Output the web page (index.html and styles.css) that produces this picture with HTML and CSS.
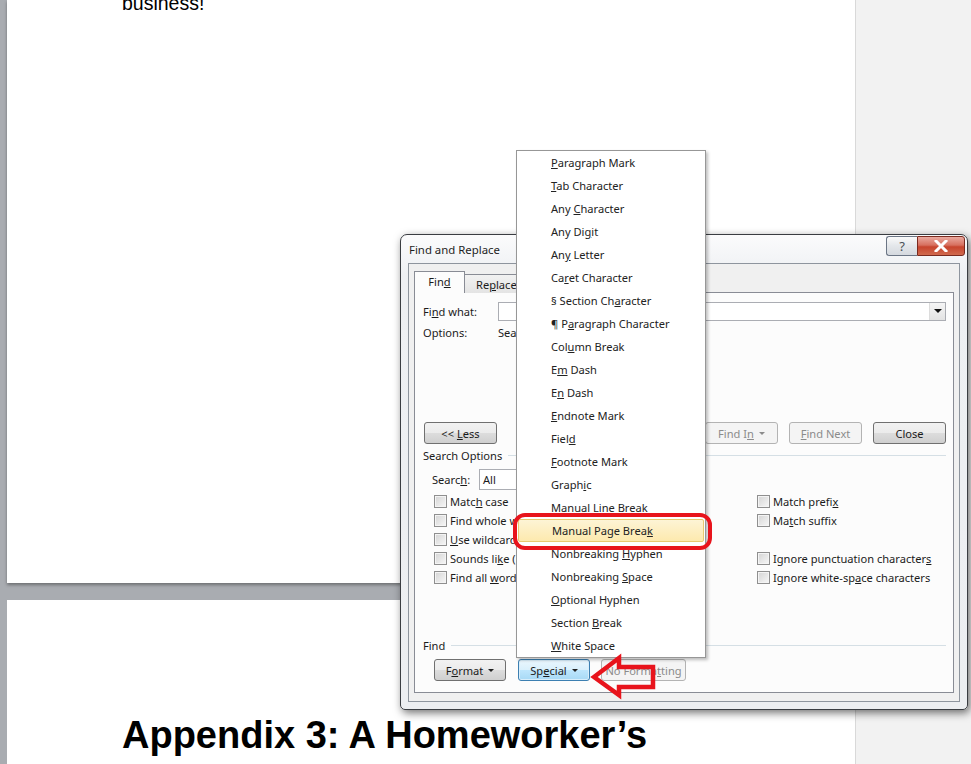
FILE: index.html
```html
<!DOCTYPE html>
<html lang="en">
<head>
    <meta charset="UTF-8">
    <title>Find and Replace</title>
    <link rel="stylesheet" href="styles.css">
</head>
<body>
    <!-- Document view behind the dialog -->
    <div class="workspace">
        <div class="doc-area">
            <div class="page page-first">
                <p class="body-text">business!</p>
            </div>
            <div class="page page-next">
                <h1 class="doc-heading">Appendix 3: A Homeworker’s</h1>
            </div>
        </div>
        <div class="side-pane"></div>
    </div>

    <!-- Find and Replace dialog -->
    <div class="dialog">
        <div class="titlebar">
            <span class="title">Find and Replace</span>
            <div class="caption-buttons">
                <div class="cap-btn cap-help">?</div>
                <div class="cap-btn cap-close">
                    <svg width="14" height="12" viewBox="0 0 14 12">
                        <path d="M2 1 L12 11 M12 1 L2 11" stroke="#fff" stroke-width="3" stroke-linecap="square"/>
                    </svg>
                </div>
            </div>
        </div>

        <div class="client">
            <div class="tabs">
                <div class="tab tab-active"><span>Fin<u>d</u></span></div>
                <div class="tab"><span>Re<u>p</u>lace</span></div>
                <div class="tab"><span><u>G</u>o To</span></div>
            </div>

            <div class="tab-panel">
                <div class="field-row">
                    <span class="field-label">Fi<u>n</u>d what:</span>
                    <div class="text-combo">
                        <span class="combo-arrow"></span>
                    </div>
                </div>
                <div class="options-row">
                    <span class="field-label">Options:</span>
                    <span>Search Down</span>
                </div>

                <div class="actions-row">
                    <button class="btn btn-less"><span>&lt;&lt; <u>L</u>ess</span></button>
                    <div class="actions-right">
                        <button class="btn btn-disabled"><span>Find I<u>n</u></span><span class="caret"></span></button>
                        <button class="btn btn-disabled"><span><u>F</u>ind Next</span></button>
                        <button class="btn"><span>Close</span></button>
                    </div>
                </div>

                <div class="group-head"><span>Search Options</span><span class="group-line"></span></div>

                <div class="search-row">
                    <span class="search-label">Searc<u>h</u>:</span>
                    <div class="select-box">All</div>
                </div>

                <div class="checks">
                    <label class="check"><span class="box"></span><span>Matc<u>h</u> case</span></label>
                    <label class="check"><span class="box"></span><span>Match prefi<u>x</u></span></label>
                    <label class="check"><span class="box"></span><span>Find whole words onl<u>y</u></span></label>
                    <label class="check"><span class="box"></span><span>Ma<u>t</u>ch suffix</span></label>
                    <label class="check"><span class="box"></span><span><u>U</u>se wildcards</span></label>
                    <span></span>
                    <label class="check"><span class="box"></span><span>Sounds li<u>k</u>e (English)</span></label>
                    <label class="check"><span class="box"></span><span>Ignore punctuation character<u>s</u></span></label>
                    <label class="check"><span class="box"></span><span>Find all <u>w</u>ord forms (English)</span></label>
                    <label class="check"><span class="box"></span><span>Ignore white-sp<u>a</u>ce characters</span></label>
                </div>

                <div class="group-head group-find"><span>Find</span><span class="group-line"></span></div>

                <div class="bottom-row">
                    <button class="btn btn-small"><span>F<u>o</u>rmat</span><span class="caret"></span></button>
                    <button class="btn btn-small btn-focus"><span>Sp<u>e</u>cial</span><span class="caret"></span></button>
                    <button class="btn btn-disabled btn-wide"><span>No Forma<u>t</u>ting</span></button>
                </div>
            </div>
        </div>
    </div>

    <!-- Special characters drop-down -->
    <ul class="special-menu">
        <li><u>P</u>aragraph Mark</li>
        <li><u>T</u>ab Character</li>
        <li>Any <u>C</u>haracter</li>
        <li>Any Di<u>g</u>it</li>
        <li>An<u>y</u> Letter</li>
        <li>Ca<u>r</u>et Character</li>
        <li>§ Section Ch<u>a</u>racter</li>
        <li>¶ P<u>a</u>ragraph Character</li>
        <li>Col<u>u</u>mn Break</li>
        <li>E<u>m</u> Dash</li>
        <li>E<u>n</u> Dash</li>
        <li><u>E</u>ndnote Mark</li>
        <li>Fiel<u>d</u></li>
        <li><u>F</u>ootnote Mark</li>
        <li>Graph<u>i</u>c</li>
        <li>Manual <u>L</u>ine Break</li>
        <li class="hot">Manual Page Brea<u>k</u></li>
        <li>Nonbreaking <u>H</u>yphen</li>
        <li>Nonbreaking <u>S</u>pace</li>
        <li><u>O</u>ptional Hyphen</li>
        <li>Section <u>B</u>reak</li>
        <li><u>W</u>hite Space</li>
    </ul>

    <!-- Red callouts -->
    <div class="callout-ring"></div>
    <svg class="callout-arrow" width="72" height="48" viewBox="586 653 72 48">
        <polygon points="594,677 619,658 619,667 653,667 653,687 619,687 619,695"
                 fill="none" stroke="#e8141c" stroke-width="4.5" stroke-linejoin="miter"/>
    </svg>
</body>
</html>
```

FILE: styles.css
```css
* {
    margin: 0;
    padding: 0;
    box-sizing: border-box;
}

body {
    width: 971px;
    height: 764px;
    overflow: hidden;
    font-family: 'Noto Sans', 'Open Sans', sans-serif;
    font-size: 11.1px;
    color: #1b1b1b;
    background: #f2f2f2;
    position: relative;
}

u {
    text-decoration: underline;
    text-underline-offset: 1px;
}

/* ---------- document view ---------- */
.workspace {
    display: flex;
    height: 764px;
}

.doc-area {
    width: 855px;
    background: #a9acb1;
    padding-left: 7px;
    display: flex;
    flex-direction: column;
    gap: 17px;
}

.page {
    background: #fff;
    width: 848px;
    font-family: 'Liberation Sans', Arial, sans-serif;
    color: #000;
}

.page-first {
    height: 583px;
    padding-left: 115px;
    box-shadow: 0 2px 3px rgba(0, 0, 0, 0.35);
}

.body-text {
    font-size: 19.5px;
    line-height: 22px;
    margin-top: -8px;
}

.page-next {
    flex: 1;
    padding: 114px 0 0 115px;
}

.doc-heading {
    font-size: 38px;
    line-height: 42px;
    font-weight: bold;
}

.side-pane {
    flex: 1;
    background: #f2f2f2;
    border-left: 1px solid #d9d9d9;
}

/* ---------- dialog frame ---------- */
.dialog {
    position: absolute;
    left: 400px;
    top: 234px;
    width: 568px;
    border: 1px solid #3a3d42;
    border-radius: 7px 7px 5px 5px;
    background: linear-gradient(#fbfbfc, #eef0f3 40px, #eceef1);
    padding: 0 7px 7px 7px;
    box-shadow: 2px 3px 8px rgba(0, 0, 0, 0.55);
}

.titlebar {
    height: 28px;
    display: flex;
    justify-content: space-between;
}

.title {
    align-self: center;
    padding-left: 1px;
    color: #1e1e1e;
    font-size: 11.4px;
}

.caption-buttons {
    display: flex;
    padding-top: 1px;
    margin-right: -5px;
}

.cap-btn {
    height: 20px;
    display: flex;
    align-items: center;
    justify-content: center;
    border: 1px solid #6b7585;
}

.cap-help {
    width: 31px;
    border-radius: 3px 0 0 3px;
    border-right: none;
    background: linear-gradient(#fafafa, #e3e6ea 50%, #d5d9df);
    color: #4a4e55;
    font-size: 13px;
}

.cap-close {
    width: 48px;
    border-radius: 0 3px 3px 0;
    background: linear-gradient(#eaa99f, #d7705f 45%, #c7442d 55%, #d06a4e);
    border-color: #7a2a1f;
}

/* ---------- client area ---------- */
.client {
    border: 1px solid #8e959e;
    background: #f0f0f0;
    padding: 7px 5px 8px 5px;
}

.tabs {
    display: flex;
    height: 22px;
    position: relative;
    z-index: 1;
}

.tab {
    margin-top: 3px;
    height: 19px;
    padding: 0 11px;
    display: flex;
    align-items: center;
    border: 1px solid #898c95;
    border-bottom: none;
    border-left: none;
    background: linear-gradient(#f2f2f2, #e4e4e4);
}

.tab-active {
    margin-top: 0;
    height: 22px;
    width: 51px;
    justify-content: center;
    border-left: 1px solid #898c95;
    background: #fcfcfc;
    padding-bottom: 2px;
}

.tab-panel {
    margin-top: -1px;
    border: 1px solid #898c95;
    background: #fcfcfc;
    padding: 9px 7px 11px 8px;
}

.field-row {
    display: flex;
    align-items: center;
    height: 19px;
}

.field-label {
    width: 75px;
    flex-shrink: 0;
}

.text-combo {
    flex: 1;
    height: 19px;
    border: 1px solid #abadb3;
    background: #fff;
    display: flex;
    justify-content: flex-end;
}

.combo-arrow {
    width: 16px;
    border-left: 1px solid #dcdcdc;
    background: linear-gradient(#f5f5f5, #e3e3e3);
    position: relative;
}

.combo-arrow::after {
    content: "";
    position: absolute;
    left: 4px;
    top: 6px;
    border: 4px solid transparent;
    border-top: 4px solid #111;
    border-bottom: none;
}

.options-row {
    display: flex;
    align-items: center;
    height: 16px;
    margin-top: 3px;
}

/* ---------- buttons ---------- */
.btn {
    font: inherit;
    color: #1b1b1b;
    height: 22px;
    width: 73px;
    border: 1px solid #707070;
    border-radius: 3px;
    background: linear-gradient(#f2f2f2, #ebebeb 50%, #dddddd 50%, #cfcfcf);
    display: inline-flex;
    align-items: center;
    justify-content: center;
    gap: 5px;
    white-space: nowrap;
}

.btn-disabled {
    color: #8b8b8b;
    border-color: #b3b3b3;
    background: #f4f4f4;
}

.btn-disabled .caret {
    border-top-color: #8b8b8b;
}

.caret {
    border: 3px solid transparent;
    border-top: 3px solid #222;
    border-bottom: none;
    margin-top: 1px;
}

.actions-row {
    margin-top: 82px;
    display: flex;
    justify-content: space-between;
}

.btn-less {
    margin-left: 1px;
}

.actions-right {
    display: flex;
    gap: 11px;
}

.group-head {
    margin-top: 4px;
    height: 14px;
    display: flex;
    align-items: center;
}

.group-line {
    flex: 1;
    margin-left: 6px;
    border-top: 1px solid #d5dfe5;
}

.search-row {
    margin-top: 7px;
    padding-left: 9px;
    display: flex;
    align-items: center;
}

.search-label {
    width: 47px;
}

.select-box {
    width: 150px;
    height: 21px;
    border: 1px solid #abadb3;
    background: #fff;
    padding-left: 3px;
    line-height: 19px;
}

.checks {
    margin-top: 2px;
    padding-left: 11px;
    display: grid;
    grid-template-columns: 323px 1fr;
    grid-auto-rows: 19px;
}

.check {
    display: flex;
    align-items: center;
    gap: 3px;
    white-space: nowrap;
}

.box {
    width: 13px;
    height: 13px;
    border: 1px solid #8f8f8f;
    background: linear-gradient(135deg, #d4d4d4, #f7f7f7);
    box-shadow: inset 0 0 0 1px #f4f4f4;
}

.group-find {
    margin-top: 51px;
}

.bottom-row {
    margin-top: 7px;
    padding-left: 11px;
    display: flex;
    gap: 12px;
}

.btn-small {
    width: 72px;
}

.btn-focus {
    border-color: #3c7fb1;
    background: linear-gradient(#eaf6fd, #d9f0fc 50%, #bee6fd 50%, #a7d9f5);
    box-shadow: inset 0 0 0 1px #d8eefb;
}

.btn-wide {
    width: 85px;
    margin-left: -1px;
}

/* ---------- drop-down menu ---------- */
.special-menu {
    position: absolute;
    left: 516px;
    top: 150px;
    width: 190px;
    list-style: none;
    background: #fff;
    border: 1px solid #979797;
    box-shadow: 2px 2px 3px rgba(0, 0, 0, 0.25);
    z-index: 2;
}

.special-menu li {
    height: 23px;
    line-height: 23px;
    padding-left: 34px;
    color: #222;
    white-space: nowrap;
}

.special-menu li.hot {
    margin: 0 1px;
    padding-left: 33px;
    background: linear-gradient(#fdf4d5, #fde9ae);
    border: 1px solid #e8c970;
    border-radius: 2px;
    line-height: 21px;
}

/* ---------- annotations ---------- */
.callout-ring {
    position: absolute;
    left: 513px;
    top: 513px;
    width: 199px;
    height: 37px;
    border: 4px solid #e8141c;
    border-radius: 12px;
    z-index: 3;
}

.callout-arrow {
    position: absolute;
    left: 586px;
    top: 653px;
    z-index: 3;
}
```
